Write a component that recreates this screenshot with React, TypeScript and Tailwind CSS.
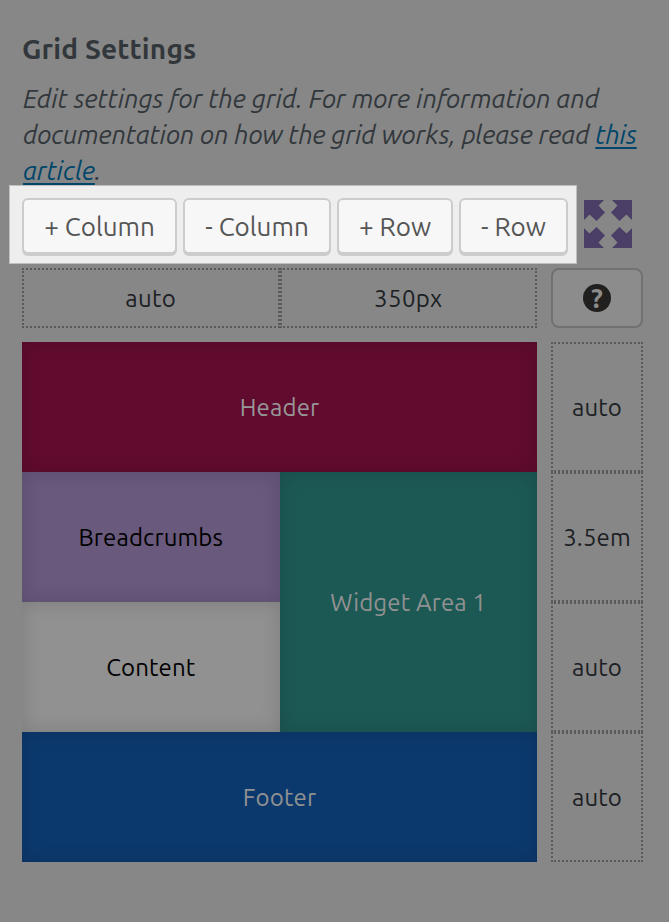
import React from "react";

const columnSizes = ["auto", "350px"];
const rowSizes = ["auto", "3.5em", "auto", "auto"];

const buttons = [
  { label: "+ Column", size: "w-[155px]" },
  { label: "- Column", size: "w-[148px]" },
  { label: "+ Row", size: "w-[116px]" },
  { label: "- Row", size: "w-[109px]" },
];

const areas = [
  { label: "Header", style: "col-span-2 bg-[#610b2f] text-[#989898]" },
  { label: "Breadcrumbs", style: "bg-[#68597d] text-black" },
  { label: "Widget Area 1", style: "row-span-2 bg-[#1c5955] text-[#919191]" },
  { label: "Content", style: "bg-[#919191] text-black" },
  { label: "Footer", style: "col-span-2 bg-[#0c396d] text-[#919191]" },
];

function ExpandIcon() {
  const arrow = "0,0 20,0 14.5,5.5 21,12.5 12.5,21 5.5,14.5 0,20";
  return (
    <svg className="mt-[15px] ml-[7px] h-12 w-12 fill-[#4b3f68]" viewBox="0 0 48 48">
      <polygon points={arrow} />
      <polygon points={arrow} transform="translate(48 0) scale(-1 1)" />
      <polygon points={arrow} transform="translate(0 48) scale(1 -1)" />
      <polygon points={arrow} transform="translate(48 48) scale(-1 -1)" />
    </svg>
  );
}

export default function App() {
  return (
    <div className="h-[922px] w-[669px] overflow-hidden bg-[#878787] pt-[31px] font-['Ubuntu','Noto_Sans',sans-serif] text-[#32373c]">
      <h2 className="ml-[22px] h-9 text-[28px] leading-9 font-bold tracking-[0.18px] whitespace-nowrap">Grid Settings</h2>
      <div className="mt-3.5 ml-[23px] h-[104px] text-[26px] leading-9 tracking-[-0.18px] whitespace-nowrap italic">
        <div className="tracking-[-0.09px]">Edit settings for the grid. For more information and</div>
        <div>
          documentation on how the grid works, please read{" "}
          <a className="text-[#00466a] underline decoration-2 underline-offset-3">this</a>
        </div>
        <div>
          <a className="text-[#00466a] underline decoration-2 underline-offset-3">article</a>.
        </div>
      </div>

      <div className="ml-[9px] flex h-[79px]">
        <div className="flex h-[79px] w-[568px] gap-1.5 border border-[#c0c0c0] bg-[#eee] pt-3 pl-3">
          {buttons.map((b) => (
            <button
              key={b.label}
              className={`${b.size} h-14 shrink-0 rounded-md border-2 border-[#ccc] bg-[#f7f7f7] pt-0.5 text-[26px] leading-9 whitespace-nowrap text-[#555] shadow-[0_2px_0_#ccc]`}
            >
              {b.label}
            </button>
          ))}
        </div>
        <ExpandIcon />
      </div>

      <div className="mt-1 ml-[22px] grid w-[621px] grid-cols-[515px_92px] gap-x-3.5 gap-y-3.5 text-[24px] leading-9 tracking-[0.15px] text-[#1c2024]">
        <div className="grid h-[60px] grid-cols-2 tracking-[0.35px]">
          {columnSizes.map((size) => (
            <div key={size} className="flex items-center justify-center border-2 border-dotted border-[#5a5a5a] pt-0.5">
              {size}
            </div>
          ))}
        </div>
        <button className="flex h-[60px] items-center justify-center rounded-lg border-2 border-[#717171] bg-[#8c8c8c]">
          <span className="flex h-7 w-7 items-center justify-center rounded-full bg-[#21201f] text-[27px] leading-7 font-bold text-[#8c8c8c]">
            ?
          </span>
        </button>
        <div className="grid h-[520px] grid-cols-2 grid-rows-4">
          {areas.map((area) => (
            <div
              key={area.label}
              className={`${area.style} flex items-center justify-center pt-0.5 shadow-[inset_0_0_20px_rgba(0,0,0,0.14)]`}
            >
              {area.label}
            </div>
          ))}
        </div>
        <div className="grid h-[520px] grid-rows-4">
          {rowSizes.map((size, i) => (
            <div key={i} className="flex items-center justify-center border-2 border-dotted border-[#5a5a5a] pt-0.5">
              {size}
            </div>
          ))}
        </div>
      </div>
    </div>
  );
}
